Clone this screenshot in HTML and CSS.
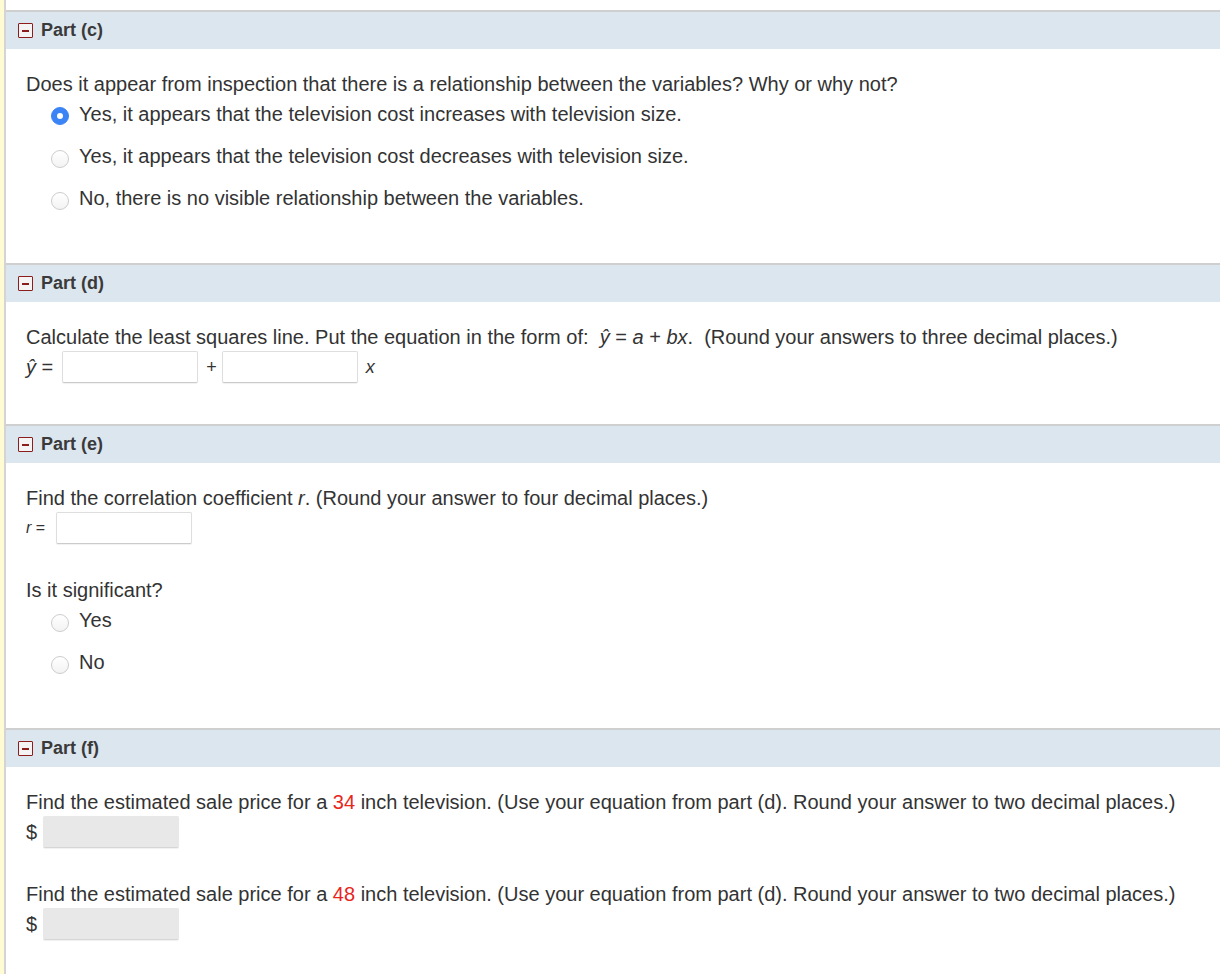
FILE: index.html
```html
<!DOCTYPE html>
<html lang="en">
<head>
    <meta charset="UTF-8">
    <title>Parts (c) - (f)</title>
    <link rel="stylesheet" href="styles.css">
</head>
<body>
    <div class="strip">
    <div class="main">

        <!-- Part (c) -->
        <div class="part part-c">
            <div class="part-head"><span class="toggle"></span>Part (c)</div>
            <div class="part-body">
                <p class="line">Does it appear from inspection that there is a relationship between the variables? Why or why not?</p>
                <div class="option"><span class="radio checked"></span>Yes, it appears that the television cost increases with television size.</div>
                <div class="option"><span class="radio"></span>Yes, it appears that the television cost decreases with television size.</div>
                <div class="option"><span class="radio"></span>No, there is no visible relationship between the variables.</div>
            </div>
        </div>

        <!-- Part (d) -->
        <div class="part part-d">
            <div class="part-head"><span class="toggle"></span>Part (d)</div>
            <div class="part-body">
                <p class="line">Calculate the least squares line. Put the equation in the form of: &nbsp;<i>ŷ</i> = <i>a</i> + <i>bx</i>. &nbsp;(Round your answers to three decimal places.)</p>
                <div class="answer">
                    <span class="lbl"><i>ŷ</i> =</span>
                    <span class="box"></span>
                    <span class="plus">+</span>
                    <span class="box"></span>
                    <i class="var">x</i>
                </div>
            </div>
        </div>

        <!-- Part (e) -->
        <div class="part part-e">
            <div class="part-head"><span class="toggle"></span>Part (e)</div>
            <div class="part-body">
                <p class="line">Find the correlation coefficient <i>r</i>. (Round your answer to four decimal places.)</p>
                <div class="answer">
                    <span class="lbl small"><i>r</i> =</span>
                    <span class="box"></span>
                </div>
                <p class="line gap">Is it significant?</p>
                <div class="option"><span class="radio"></span>Yes</div>
                <div class="option"><span class="radio"></span>No</div>
            </div>
        </div>

        <!-- Part (f) -->
        <div class="part part-f">
            <div class="part-head"><span class="toggle"></span>Part (f)</div>
            <div class="part-body">
                <p class="line">Find the estimated sale price for a <span class="num">34</span> inch television. (Use your equation from part (d). Round your answer to two decimal places.)</p>
                <div class="answer">
                    <span class="dollar">$</span>
                    <span class="box grey"></span>
                </div>
                <p class="line gap">Find the estimated sale price for a <span class="num">48</span> inch television. (Use your equation from part (d). Round your answer to two decimal places.)</p>
                <div class="answer">
                    <span class="dollar">$</span>
                    <span class="box grey"></span>
                </div>
            </div>
        </div>

    </div>
    </div>
</body>
</html>
```

FILE: styles.css
```css
body {
    margin: 0;
    padding: 0;
    font-family: "Liberation Sans", Arial, sans-serif;
    color: #333;
    background: #fff;
}

.strip {
    border-left: 4px solid #fffbd2;
    min-height: 974px;
    box-sizing: border-box;
}

.main {
    border-left: 2px solid #d4d4d4;
    min-height: 974px;
    padding-top: 10px;
    box-sizing: border-box;
}

.part-head {
    border-top: 2px solid #cfcfcf;
    background-color: #dce6ef;
    height: 37px;
    display: flex;
    align-items: center;
    padding-left: 12px;
    font-size: 18px;
    font-weight: bold;
    color: #3a3a3a;
}

.toggle {
    width: 13px;
    height: 13px;
    border: 1.5px solid #8c1d1d;
    border-radius: 1px;
    background: #f4f4f4;
    margin-right: 8px;
    position: relative;
    flex-shrink: 0;
}

.toggle::after {
    content: "";
    position: absolute;
    left: 3px;
    top: 5.5px;
    width: 7px;
    height: 2px;
    background: #8c1d1d;
}

.part-body {
    padding: 23px 20px 0 20px;
    font-size: 20px;
    line-height: 24px;
}

.part-c .part-body { height: 214px; box-sizing: border-box; }
.part-d .part-body { height: 122px; box-sizing: border-box; }
.part-e .part-body { height: 265px; box-sizing: border-box; }

.line {
    margin: 0;
}

.line.gap {
    margin-top: 34px;
}

.option {
    display: flex;
    align-items: center;
    margin-top: 18px;
    padding-left: 25px;
}

.line + .option {
    margin-top: 6px;
}

.radio {
    width: 16px;
    height: 16px;
    border: 1px solid #cdcdcd;
    border-radius: 50%;
    background: linear-gradient(#fff, #f3f3f3);
    margin-right: 10px;
    margin-top: 6px;
    flex-shrink: 0;
    position: relative;
}

.radio.checked {
    border-color: #3b84f5;
    background: #3b84f5;
    margin-top: 4px;
}

.radio.checked::after {
    content: "";
    position: absolute;
    left: 5px;
    top: 5px;
    width: 6px;
    height: 6px;
    border-radius: 50%;
    background: #fff;
}

.answer {
    display: flex;
    align-items: center;
    margin-top: 2px;
}

.lbl {
    margin-right: 9px;
}

.lbl.small {
    font-size: 16px;
    margin-right: 11px;
}

.box {
    width: 134px;
    height: 30px;
    border: 1px solid #dedede;
    border-bottom-color: #cbcbcb;
    border-radius: 2px;
    background: #fff;
    box-shadow: 0 1px 1px rgba(0, 0, 0, 0.06);
}

.box.grey {
    background: #e8e8e8;
    border-color: #e8e8e8;
    border-bottom-color: #d6d6d6;
}

.plus {
    font-size: 18px;
    margin: 0 5px 0 8px;
}

.var {
    margin-left: 8px;
    font-size: 18px;
}

.dollar {
    margin-right: 6px;
}

.num {
    color: #e8261c;
}
```
